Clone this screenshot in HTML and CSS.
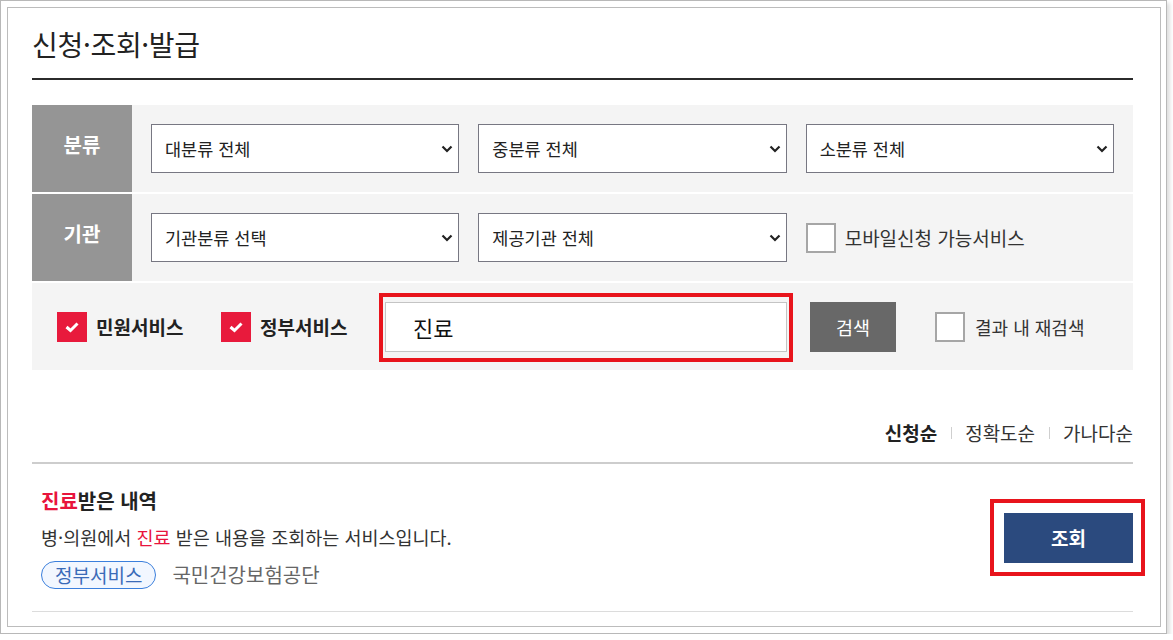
FILE: index.html
```html
<!DOCTYPE html>
<html lang="ko">
<head>
<meta charset="utf-8">
<title>신청·조회·발급</title>
<link rel="stylesheet" href="styles.css">
</head>
<body>
<div class="frame">
  <div class="inner">
    <h2 class="page-title">신청·조회·발급</h2>

    <div class="filter">
      <div class="frow">
        <div class="flabel">분류</div>
        <div class="ffields">
          <div class="select"><span>대분류 전체</span><svg class="chev" width="12" height="8" viewBox="0 0 12 8"><path d="M1.5 1.5 L6 6 L10.5 1.5" fill="none" stroke="#222" stroke-width="2.2"/></svg></div>
          <div class="select"><span>중분류 전체</span><svg class="chev" width="12" height="8" viewBox="0 0 12 8"><path d="M1.5 1.5 L6 6 L10.5 1.5" fill="none" stroke="#222" stroke-width="2.2"/></svg></div>
          <div class="select"><span>소분류 전체</span><svg class="chev" width="12" height="8" viewBox="0 0 12 8"><path d="M1.5 1.5 L6 6 L10.5 1.5" fill="none" stroke="#222" stroke-width="2.2"/></svg></div>
        </div>
      </div>
      <div class="frow">
        <div class="flabel">기관</div>
        <div class="ffields">
          <div class="select"><span>기관분류 선택</span><svg class="chev" width="12" height="8" viewBox="0 0 12 8"><path d="M1.5 1.5 L6 6 L10.5 1.5" fill="none" stroke="#222" stroke-width="2.2"/></svg></div>
          <div class="select"><span>제공기관 전체</span><svg class="chev" width="12" height="8" viewBox="0 0 12 8"><path d="M1.5 1.5 L6 6 L10.5 1.5" fill="none" stroke="#222" stroke-width="2.2"/></svg></div>
          <label class="plain-check mobile"><span class="box"></span><span>모바일신청 가능서비스</span></label>
        </div>
      </div>
      <div class="srow">
        <label class="chk-item"><span class="redbox"><svg width="16" height="12" viewBox="0 0 16 12"><path d="M2.5 6 L6.5 9.5 L13.5 2.5" fill="none" stroke="#fff" stroke-width="3"/></svg></span><span class="chk-text">민원서비스</span></label>
        <label class="chk-item"><span class="redbox"><svg width="16" height="12" viewBox="0 0 16 12"><path d="M2.5 6 L6.5 9.5 L13.5 2.5" fill="none" stroke="#fff" stroke-width="3"/></svg></span><span class="chk-text">정부서비스</span></label>
        <div class="search-wrap"><div class="search-input">진료</div></div>
        <button class="search-btn">검색</button>
        <label class="plain-check re"><span class="box"></span><span>결과 내 재검색</span></label>
      </div>
    </div>

    <div class="sortbar">
      <span class="sort on">신청순</span>
      <span class="sep"></span>
      <span class="sort">정확도순</span>
      <span class="sep"></span>
      <span class="sort">가나다순</span>
    </div>

    <div class="item">
      <div class="item-info">
        <div class="item-title"><em>진료</em>받은 내역</div>
        <div class="item-desc">병·의원에서 <em>진료</em> 받은 내용을 조회하는 서비스입니다.</div>
        <div class="item-meta"><span class="tag">정부서비스</span><span class="org">국민건강보험공단</span></div>
      </div>
      <div class="btn-wrap"><button class="view-btn">조회</button></div>
    </div>
  </div>
</div>
</body>
</html>
```

FILE: styles.css
```css
* { box-sizing: border-box; }
html, body { margin: 0; padding: 0; background: #fff; }
body {
  font-family: "Malgun Gothic", "Noto Sans CJK KR", "Noto Sans", sans-serif;
  color: #222;
}
.frame {
  width: 1167px;
  height: 634px;
  border: 1px solid #b8b8b8;
  padding: 6px 5px 6px 6px;
  box-shadow: 3px 3px 4px rgba(0,0,0,0.13);
  background: #fff;
}
.inner {
  height: 100%;
  border: 1px solid #bcbcbc;
  padding: 0 27px 0 24px;
}
.page-title {
  margin: 0;
  height: 72px;
  padding-top: 18px;
  font-size: 28px;
  line-height: 36px;
  font-weight: 400;
  color: #222;
  border-bottom: 2px solid #2b2b2b;
  letter-spacing: -0.3px;
}
.filter { margin-top: 25px; }
.frow {
  display: flex;
  height: 87px;
  margin-bottom: 2px;
}
.flabel {
  width: 100px;
  background: #959595;
  color: #fff;
  font-size: 20px;
  font-weight: 700;
  display: flex;
  align-items: center;
  justify-content: center;
  padding-bottom: 8px;
}
.ffields {
  flex: 1;
  background: #f4f4f4;
  padding: 19px;
  display: grid;
  grid-template-columns: 1fr 1fr 1fr;
  column-gap: 19px;
}
.select {
  height: 49px;
  border: 1px solid #777782;
  background: #fff;
  display: flex;
  align-items: center;
  justify-content: space-between;
  padding: 0 5px 0 13px;
  font-size: 17.5px;
  color: #222;
}
.chev { flex: none; }
.plain-check {
  display: flex;
  align-items: center;
  font-size: 18px;
  color: #333;
}
.plain-check.mobile { font-size: 19px; }
.plain-check .box {
  width: 30px;
  height: 30px;
  border: 2px solid #a6a6a6;
  background: #fff;
  margin-right: 9px;
  flex: none;
}
.srow {
  display: flex;
  align-items: center;
  height: 87px;
  background: #f4f4f4;
  padding-left: 25px;
}
.chk-item {
  width: 164px;
  display: flex;
  align-items: center;
  flex: none;
}
.redbox {
  width: 30px;
  height: 30px;
  background: #e81a3c;
  display: flex;
  align-items: center;
  justify-content: center;
  margin-right: 9px;
}
.chk-text {
  font-size: 19px;
  font-weight: 700;
  color: #222;
}
.search-wrap {
  position: relative;
  width: 402px;
  height: 50px;
}
.search-wrap::after {
  content: "";
  position: absolute;
  top: -9px;
  left: -6px;
  right: -6px;
  bottom: -10px;
  border: 4px solid #e8141c;
}
.search-input {
  height: 50px;
  border: 1px solid #c4c4c4;
  background: #fff;
  padding-left: 27px;
  font-size: 22px;
  line-height: 48px;
  color: #111;
}
.search-btn {
  margin-left: 23px;
  width: 86px;
  height: 50px;
  border: 0;
  background: #686868;
  color: #fff;
  font-family: inherit;
  font-size: 18.5px;
  padding: 0;
}
.plain-check.re { margin-left: 39px; }
.plain-check.re .box { margin-right: 10px; }
.sortbar {
  height: 94px;
  display: flex;
  justify-content: flex-end;
  align-items: flex-end;
  padding-bottom: 16px;
  border-bottom: 2px solid #cdcdcd;
  font-size: 19px;
  line-height: 26px;
  color: #333;
}
.sort.on { font-weight: 700; color: #222; }
.sep {
  width: 1px;
  height: 12px;
  background: #cfcfcf;
  margin: 0 13px 7px 14px;
}
.item {
  height: 148px;
  border-bottom: 1px solid #dcdcdc;
  display: flex;
  align-items: center;
  justify-content: space-between;
  padding-left: 9px;
}
.item em { font-style: normal; color: #e8143c; }
.item-title {
  font-size: 20px;
  font-weight: 700;
  line-height: 37px;
  color: #222;
}
.item-desc {
  font-size: 18.5px;
  line-height: 37px;
  color: #333;
}
.item-meta {
  height: 37px;
  display: flex;
  align-items: center;
}
.tag {
  height: 28px;
  padding: 0 13px;
  border: 1px solid #3b7fdc;
  border-radius: 14px;
  background: #f2f7ff;
  color: #3a6bb8;
  font-size: 19px;
  line-height: 26px;
}
.org {
  margin-left: 16px;
  font-size: 20px;
  color: #666;
}
.btn-wrap {
  position: relative;
}
.btn-wrap::after {
  content: "";
  position: absolute;
  top: -14px;
  left: -14px;
  right: -12px;
  bottom: -13px;
  border: 4px solid #e8141c;
}
.view-btn {
  display: block;
  width: 129px;
  height: 50px;
  border: 0;
  background: #2b4a7e;
  color: #fff;
  font-family: inherit;
  font-size: 19px;
  font-weight: 700;
  padding: 0;
}
```
